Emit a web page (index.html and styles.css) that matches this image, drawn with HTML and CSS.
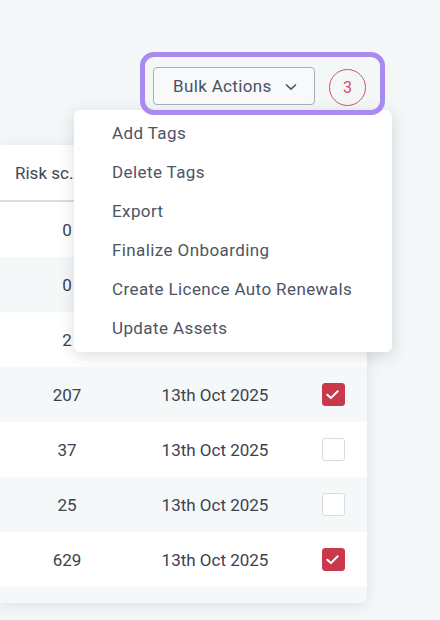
FILE: index.html
```html
<!DOCTYPE html>
<html>
<head>
<meta charset="utf-8">
<link rel="stylesheet" href="styles.css">
</head>
<body>
<div class="page">
  <div class="toolbar">
    <div class="highlight">
      <button class="bulk-btn">
        <span>Bulk Actions</span>
        <svg class="chev" width="14" height="10" viewBox="0 0 14 10"><path d="M2.5 3 L7 7.2 L11.5 3" fill="none" stroke="#525a68" stroke-width="1.7" stroke-linecap="round" stroke-linejoin="round"/></svg>
      </button>
      <div class="count">3</div>
    </div>
  </div>

  <div class="card">
    <div class="row head">
      <div class="cell hcell">Risk score</div>
      <div class="cell"></div>
      <div class="cell"></div>
    </div>
    <div class="row"><div class="cell num">0</div><div class="cell"></div><div class="cell"></div></div>
    <div class="row alt"><div class="cell num">0</div><div class="cell"></div><div class="cell"></div></div>
    <div class="row"><div class="cell num">2</div><div class="cell"></div><div class="cell"></div></div>
    <div class="row alt"><div class="cell num">207</div><div class="cell">13th Oct 2025</div><div class="cell"><span class="cb on"><svg width="23" height="23" viewBox="0 0 23 23"><path d="M6.3 11.8 L9.9 15.1 L16.7 8.2" fill="none" stroke="#fff" stroke-width="2" stroke-linecap="round" stroke-linejoin="round"/></svg></span></div></div>
    <div class="row"><div class="cell num">37</div><div class="cell">13th Oct 2025</div><div class="cell"><span class="cb"></span></div></div>
    <div class="row alt"><div class="cell num">25</div><div class="cell">13th Oct 2025</div><div class="cell"><span class="cb"></span></div></div>
    <div class="row"><div class="cell num">629</div><div class="cell">13th Oct 2025</div><div class="cell"><span class="cb on"><svg width="23" height="23" viewBox="0 0 23 23"><path d="M6.3 11.8 L9.9 15.1 L16.7 8.2" fill="none" stroke="#fff" stroke-width="2" stroke-linecap="round" stroke-linejoin="round"/></svg></span></div></div>
    <div class="row alt"></div>
  </div>

  <ul class="menu">
    <li>Add Tags</li>
    <li>Delete Tags</li>
    <li>Export</li>
    <li>Finalize Onboarding</li>
    <li>Create Licence Auto Renewals</li>
    <li>Update Assets</li>
  </ul>
</div>
</body>
</html>
```

FILE: styles.css
```css
* { box-sizing: border-box; }
html, body {
  margin: 0;
  padding: 0;
  background: #f4f7f8;
  font-family: Roboto, "Liberation Sans", sans-serif;
  color: #3b4251;
}
.page {
  position: relative;
  width: 440px;
  height: 620px;
  overflow: hidden;
}
.toolbar {
  display: flex;
  justify-content: flex-end;
  padding: 52px 55px 0 0;
  height: 145px;
}
.highlight {
  position: relative;
  z-index: 3;
  display: flex;
  align-items: center;
  gap: 14px;
  height: 63px;
  border: 5px solid #a98af0;
  border-radius: 14px;
  padding: 5px 14px 0 8px;
}
.bulk-btn {
  display: flex;
  align-items: center;
  gap: 12px;
  width: 162px;
  height: 38px;
  padding: 0 0 0 19px;
  background: #f7f9fa;
  border: 1px solid #a6aeb8;
  border-radius: 4px;
  font-family: inherit;
  font-size: 17px;
  letter-spacing: 0.35px;
  color: #4b5263;
}
.chev { display: block; margin-top: 1px; }
.count {
  width: 37px;
  height: 37px;
  margin-top: 3px;
  border: 1.5px solid #d4505f;
  border-radius: 50%;
  display: flex;
  align-items: center;
  justify-content: center;
  font-size: 16px;
  color: #d4505f;
}
.card {
  width: 367px;
  height: 458px;
  background: #fff;
  border-radius: 0 8px 8px 0;
  box-shadow: 0 3px 14px rgba(30, 50, 70, 0.1);
  overflow: hidden;
}
.row {
  display: grid;
  grid-template-columns: 134px 162px 71px;
  height: 55px;
  align-items: center;
  font-size: 17px;
}
.row.alt { background: #f5f8f9; }
.row.head {
  height: 57px;
  border-bottom: 2px solid #d6dde6;
  color: #3f4654;
}
.cell {
  text-align: center;
  display: flex;
  justify-content: center;
  align-items: center;
}
.hcell {
  display: block;
  text-align: left;
  padding: 0 47px 0 15px;
  white-space: nowrap;
  overflow: hidden;
  text-overflow: ellipsis;
}
.cb {
  display: block;
  width: 23px;
  height: 23px;
  margin-left: 3px;
  border: 1.5px solid #d6dce4;
  border-radius: 3px;
  background: #fff;
}
.cb.on {
  background: #c9394c;
  border-color: #c9394c;
  position: relative;
}
.cb.on svg { position: absolute; left: -1.5px; top: -1.5px; }
.menu {
  position: absolute;
  z-index: 2;
  left: 74px;
  top: 110px;
  width: 318px;
  height: 242px;
  margin: 0;
  padding: 4px 0;
  list-style: none;
  background: #fff;
  border-radius: 6px;
  box-shadow: 0 4px 16px rgba(30, 45, 60, 0.16);
}
.menu li {
  height: 39px;
  line-height: 39px;
  padding-left: 38px;
  font-size: 17px;
  letter-spacing: 0.4px;
  color: #4d5464;
}
```
